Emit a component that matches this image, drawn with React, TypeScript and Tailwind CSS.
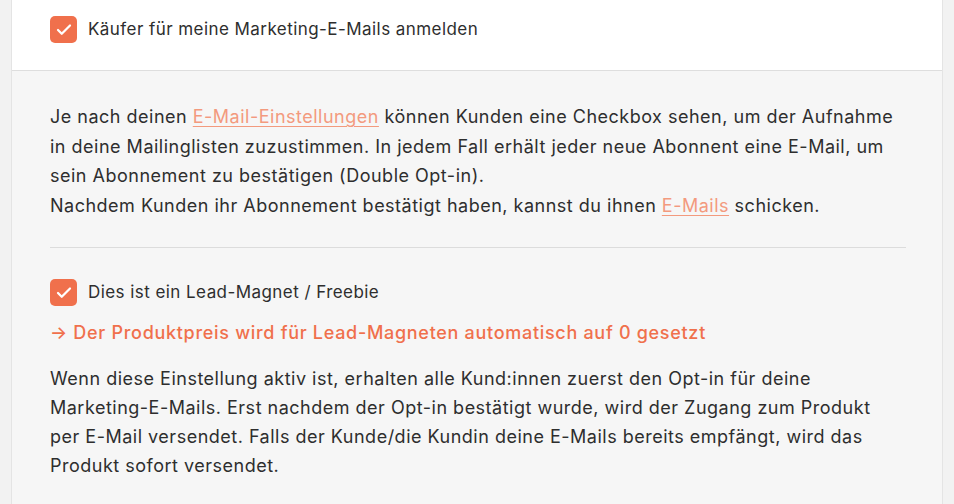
import { Check } from "lucide-react";

function Box() {
  return (
    <span className="grid h-[27px] w-[27px] shrink-0 place-items-center rounded-[5px] bg-[#f0704c]">
      <Check className="h-[18px] w-[18px] text-white" strokeWidth={3} />
    </span>
  );
}

export default function App() {
  return (
    <div className="min-h-[504px] bg-[#f2f2f2] px-[11px] font-['Inter',sans-serif] text-[#2e2e2e]">
      <div className="min-h-[504px] border-x border-[#e4e4e4] bg-[#f6f6f6]">
        <div className="flex items-center gap-[11px] border-b border-[#dedede] bg-white px-[38px] pb-[27px] pt-[16px]">
          <Box />
          <span className="text-[17px] tracking-[0.44px]">Käufer für meine Marketing-E-Mails anmelden</span>
        </div>

        <div className="px-[38px] pt-[31px]">
          <p className="text-[18px] leading-[29.5px] tracking-[0.5px]">
            Je nach deinen{" "}
            <a className="text-[#f39a7e] underline decoration-1 underline-offset-[3px]">E-Mail-Einstellungen</a> können
            Kunden eine Checkbox sehen, um der Aufnahme in deine Mailinglisten zuzustimmen. In jedem Fall erhält jeder
            neue Abonnent eine E-Mail, um sein Abonnement zu bestätigen (Double Opt-in).
            <br />
            Nachdem Kunden ihr Abonnement bestätigt haben, kannst du ihnen{" "}
            <a className="text-[#f39a7e] underline decoration-1 underline-offset-[3px]">E-Mails</a> schicken.
          </p>

          <div className="mt-[27px] mr-[-2px] border-t border-[#dcdcdc]" />

          <div className="mt-[31px] flex items-center gap-[11px]">
            <Box />
            <span className="text-[17px] tracking-[0.44px]">Dies ist ein Lead-Magnet / Freebie</span>
          </div>

          <p className="mt-[13px] text-[18px] font-medium tracking-[0.7px] text-[#f0704c]">
            → Der Produktpreis wird für Lead-Magneten automatisch auf 0 gesetzt
          </p>

          <p className="mt-[18px] text-[18px] leading-[29px] tracking-[0.5px]">
            Wenn diese Einstellung aktiv ist, erhalten alle Kund:innen zuerst den Opt-in für deine Marketing-E-Mails. Erst
            nachdem der Opt-in bestätigt wurde, wird der Zugang zum Produkt per E-Mail versendet. Falls der Kunde/die
            Kundin deine E-Mails bereits empfängt, wird das Produkt sofort versendet.
          </p>
        </div>
      </div>
    </div>
  );
}
